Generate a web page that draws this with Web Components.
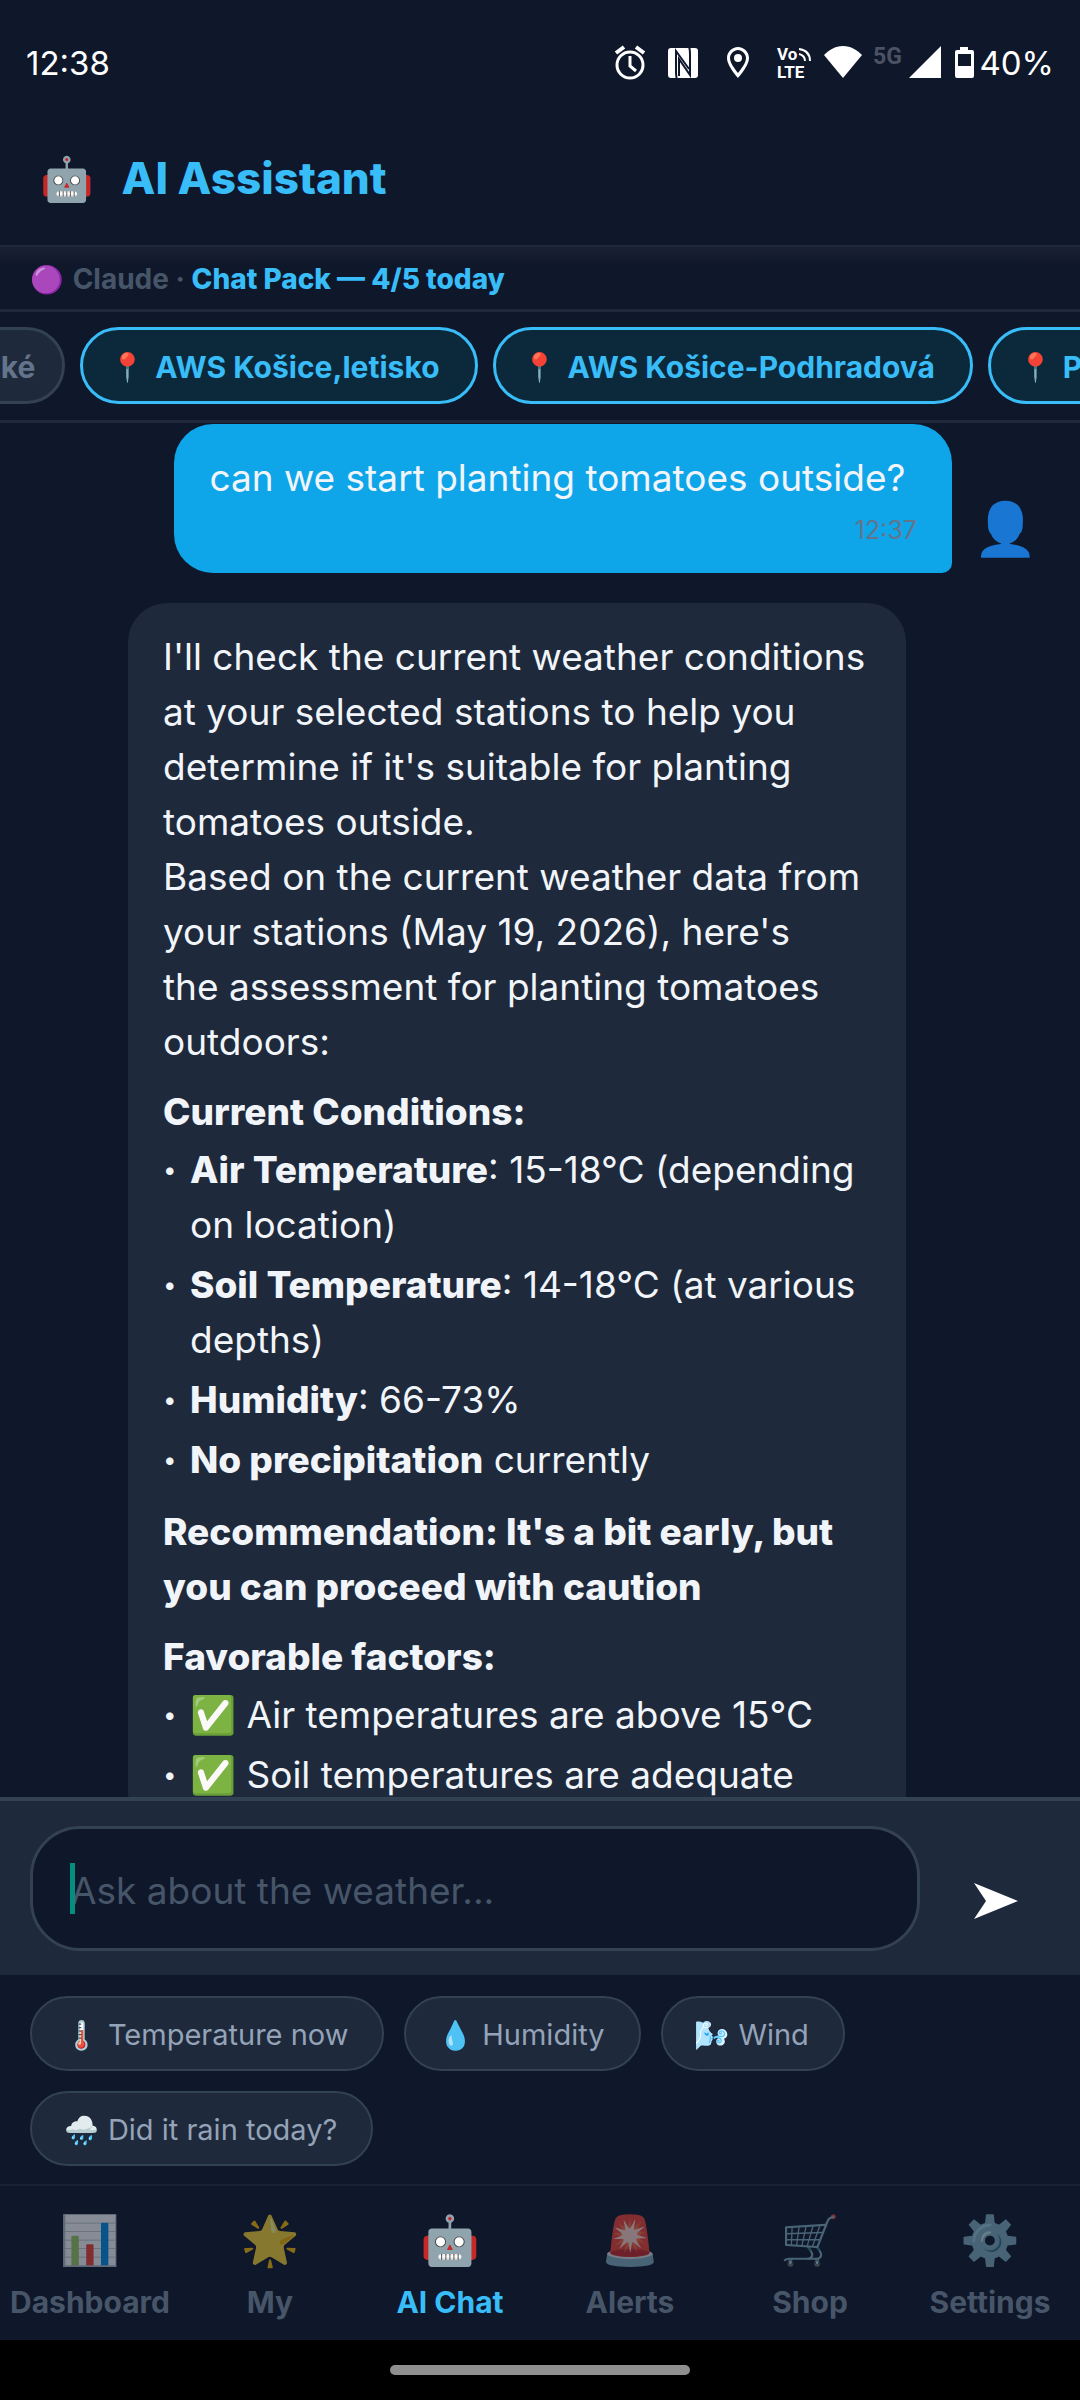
<!DOCTYPE html>
<html lang="en">
<head>
<meta charset="utf-8">
<meta name="viewport" content="width=device-width, initial-scale=1">
<title>AI Assistant</title>
<style>
  body {
    margin: 0;
    height: 100vh;
    display: flex;
    flex-direction: column;
    overflow: hidden;
    background: #0f172a;
    color: #f1f5f9;
    font-family: Inter, "Noto Sans", "Noto Color Emoji", sans-serif;
    font-size: 37px;
  }
</style>
</head>
<body>
  <status-bar time="12:38" battery="40%"></status-bar>
  <app-header icon="🤖">AI Assistant</app-header>
  <plan-line provider="Claude">Chat Pack — 4/5 today</plan-line>

  <station-strip>
    <station-chip off cut>ské</station-chip>
    <station-chip icon="📍">AWS Košice,letisko</station-chip>
    <station-chip icon="📍">AWS Košice-Podhradová</station-chip>
    <station-chip icon="📍">PV</station-chip>
  </station-strip>

  <message-list>
    <chat-message from="user" avatar="👤" time="12:37">can we start planting tomatoes outside?</chat-message>
    <chat-message from="bot">
      <answer-text>I'll check the current weather conditions at your selected stations to help you determine if it's suitable for planting tomatoes outside.</answer-text>
      <answer-text>Based on the current weather data from your stations (May 19, 2026), here's the&nbsp;assessment for planting tomatoes outdoors:</answer-text>
      <answer-heading>Current Conditions:</answer-heading>
      <answer-point><b>Air Temperature</b>: 15-18°C (depending on location)</answer-point>
      <answer-point><b>Soil Temperature</b>: 14-18°C (at various depths)</answer-point>
      <answer-point><b>Humidity</b>: 66-73%</answer-point>
      <answer-point><b>No precipitation</b> currently</answer-point>
      <answer-heading>Recommendation: It's a bit early, but you can proceed with caution</answer-heading>
      <answer-heading>Favorable factors:</answer-heading>
      <answer-point>✅ Air temperatures are above 15°C</answer-point>
      <answer-point>✅ Soil temperatures are adequate</answer-point>
    </chat-message>
  </message-list>

  <chat-composer placeholder="Ask about the weather..."></chat-composer>

  <quick-questions>
    <quick-chip icon="🌡️">Temperature now</quick-chip>
    <quick-chip icon="💧">Humidity</quick-chip>
    <quick-chip icon="🌬️">Wind</quick-chip>
    <quick-chip icon="🌧️">Did it rain today?</quick-chip>
  </quick-questions>

  <tab-bar>
    <tab-item icon="📊" href="#dashboard">Dashboard</tab-item>
    <tab-item icon="🌟" href="#my">My</tab-item>
    <tab-item icon="🤖" href="#chat" active>AI Chat</tab-item>
    <tab-item icon="🚨" href="#alerts">Alerts</tab-item>
    <tab-item icon="🛒" href="#shop">Shop</tab-item>
    <tab-item icon="⚙️" href="#settings">Settings</tab-item>
  </tab-bar>
  <home-indicator></home-indicator>

<script>
// Small helper: every element gets an open shadow root filled from a string
class BaseElement extends HTMLElement {
  constructor() {
    super();
    this.attachShadow({ mode: "open" });
  }

  connectedCallback() {
    this.shadowRoot.innerHTML = this.render();
  }

  attr(name) {
    return this.getAttribute(name) || "";
  }
}

class StatusBar extends BaseElement {
  render() {
    return `
      <style>
        :host {
          display: flex;
          align-items: center;
          justify-content: space-between;
          height: 126px;
          padding: 0 26px;
          box-sizing: border-box;
          flex: none;
          color: #fff;
          font-size: 33px;
        }
        .icons { display: flex; align-items: center; }
        svg { display: block; fill: #fff; }
      </style>
      <span>${this.attr("time")}</span>
      <div class="icons">
        <svg width="366" height="46" viewBox="0 0 366 46" role="img" aria-label="Status icons">
          <!-- alarm -->
          <g fill="none" stroke="#fff" stroke-width="3">
            <circle cx="17" cy="25" r="13"/>
            <path d="M17 16v10l6 5"/>
            <path d="M3 13l8-6M31 13l-8-6" stroke-width="4"/>
          </g>
          <!-- nfc -->
          <rect x="55" y="8" width="30" height="30" rx="3"/>
          <g fill="none" stroke="#0f172a" stroke-width="2">
            <path d="M64 39c-1-2-1-4-1-8V11l13 18"/>
            <path d="M76 7c1 2 1 4 1 8v20L66 19v17"/>
          </g>
          <!-- location -->
          <path fill-rule="evenodd" d="M125 7c-6 0-11 5-11 11 0 8 11 20 11 20s11-12 11-20c0-6-5-11-11-11zm0 3c4 0 8 4 8 8 0 5-5 11-8 15-3-4-8-10-8-15 0-4 4-8 8-8z"/>
          <circle cx="125" cy="18" r="4"/>
          <!-- volte -->
          <g font-family="Roboto, sans-serif" font-weight="700" font-size="17">
            <text x="164" y="20">Vo</text>
            <text x="164" y="38">LTE</text>
          </g>
          <g fill="none" stroke="#fff" stroke-width="2">
            <path d="M186 14c4 1 6 3 6 7M186 9c7 1 11 5 11 12"/>
          </g>
          <!-- wifi -->
          <path d="M230 38L211 15c5-5 11-9 19-9s14 4 19 9z"/>
          <!-- mobile signal -->
          <text x="260" y="24" font-family="Roboto, sans-serif" font-weight="700" font-size="23" fill="#4b5263">5G</text>
          <path d="M296 38L328 6v32z"/>
          <!-- battery -->
          <path fill-rule="evenodd" d="M347 7h8v3h4q2 0 2 2v24q0 2-2 2h-15q-2 0-2-2V12q0-2 2-2h3zm-2 7v12h13V14z"/>
        </svg>
        <span>${this.attr("battery")}</span>
      </div>
    `;
  }
}

class AppHeader extends BaseElement {
  render() {
    return `
      <style>
        :host {
          display: flex;
          align-items: center;
          gap: 28px;
          height: 121px;
          padding: 0 40px 16px;
          box-sizing: border-box;
          flex: none;
          border-bottom: 2px solid #1e293b;
        }
        span { font-size: 43px; line-height: 64px; }
        h1 { margin: 0; font-size: 44px; font-weight: 800; line-height: 64px; color: #38bdf8; }
      </style>
      <span aria-hidden="true">${this.attr("icon")}</span>
      <h1><slot></slot></h1>
    `;
  }
}

class PlanLine extends BaseElement {
  render() {
    return `
      <style>
        :host {
          display: flex;
          align-items: center;
          gap: 9px;
          height: 65px;
          padding: 2px 30px 0;
          box-sizing: border-box;
          flex: none;
          border-bottom: 3px solid #1e293b;
          background: linear-gradient(#1a2134, #0f172a 18px);
          font-size: 28px;
          font-weight: 700;
          color: #475569;
        }
        b { color: #38bdf8; font-weight: 800; }
        .dot { font-size: 27px; }
      </style>
      <span class="dot">🟣</span>
      <span>${this.attr("provider")} · <b><slot></slot></b></span>
    `;
  }
}

class StationStrip extends BaseElement {
  render() {
    return `
      <style>
        :host {
          display: flex;
          gap: 15px;
          padding: 15px 0 16px;
          flex: none;
          overflow: hidden;
          border-bottom: 3px solid #1e293b;
        }
      </style>
      <slot></slot>
    `;
  }
}

class StationChip extends BaseElement {
  render() {
    const icon = this.attr("icon");
    return `
      <style>
        :host { display: block; flex: none; }
        /* chip that is scrolled out past the left edge */
        :host([cut]) { margin-left: -46px; }
        button {
          display: flex;
          align-items: center;
          gap: 10px;
          height: 77px;
          padding: 2px 35px 0 27px;
          border: 3px solid #38bdf8;
          border-radius: 39px;
          background: #0c293b;
          color: #38bdf8;
          font: inherit;
          font-size: 30px;
          font-weight: 700;
          white-space: nowrap;
        }
        span { font-size: 28px; }
        :host([off]) button {
          padding: 2px 27px 0;
          border-color: #334155;
          background: #1e293b;
          color: #64748b;
        }
      </style>
      <button type="button">${icon ? `<span>${icon}</span>` : ""}<slot></slot></button>
    `;
  }
}

class MessageList extends BaseElement {
  render() {
    return `
      <style>
        :host {
          display: flex;
          flex-direction: column;
          gap: 30px;
          flex: 1;
          min-height: 0;
          padding: 1px 30px 0;
          overflow: hidden;
        }
      </style>
      <slot></slot>
    `;
  }
}

class ChatMessage extends BaseElement {
  render() {
    const time = this.attr("time");
    return `
      <style>
        :host { display: flex; align-items: flex-end; flex: none; }
        :host([from="user"]) { flex-direction: row-reverse; }
        .avatar {
          width: 98px;
          padding-left: 10px;
          box-sizing: border-box;
          flex: none;
          text-align: center;
          font-size: 52px;
          line-height: 88px;
        }
        .bubble {
          max-width: 72vw;
          padding: 26px 35px;
          box-sizing: border-box;
          border-radius: 39px;
          background: #1e293b;
          line-height: 55px;
        }
        :host([from="user"]) .bubble {
          min-width: 72vw;
          padding-bottom: 18px;
          border-bottom-right-radius: 10px;
          background: #0ea5e9;
        }
        time { display: block; text-align: right; font-size: 25px; line-height: 50px; color: #64748b; }
      </style>
      <span class="avatar">${this.attr("avatar")}</span>
      <div class="bubble">
        <slot></slot>
        ${time ? `<time>${time}</time>` : ""}
      </div>
    `;
  }
}

class AnswerText extends BaseElement {
  render() {
    return `
      <style>
        :host { display: block; }
        p { margin: 0; }
      </style>
      <p><slot></slot></p>
    `;
  }
}

class AnswerHeading extends BaseElement {
  render() {
    return `
      <style>
        :host { display: block; margin-top: 15px; }
        h2 { margin: 0; font-size: inherit; font-weight: 800; }
      </style>
      <h2><slot></slot></h2>
    `;
  }
}

class AnswerPoint extends BaseElement {
  render() {
    return `
      <style>
        :host { display: flex; padding: 3px 0 2px; }
        .bullet { width: 27px; flex: none; font-size: 24px; }
        ::slotted(b) { font-weight: 800; }
      </style>
      <span class="bullet">•</span>
      <span><slot></slot></span>
    `;
  }
}

class ChatComposer extends BaseElement {
  render() {
    return `
      <style>
        :host {
          display: flex;
          align-items: center;
          gap: 22px;
          padding: 25px 30px 24px;
          flex: none;
          border-top: 4px solid #334155;
          background: #1e293b;
        }
        label { position: relative; display: block; flex: 1; }
        input {
          width: 100%;
          height: 125px;
          padding: 4px 38px 0;
          box-sizing: border-box;
          border: 3px solid #334155;
          border-radius: 50px;
          outline: none;
          background: #0f172a;
          color: #f1f5f9;
          font: inherit;
        }
        input::placeholder { color: #475569; opacity: 1; }
        .caret { position: absolute; left: 40px; top: 37px; width: 5px; height: 51px; background: #058d80; }
        button { width: 108px; height: 100px; padding: 0; border: 0; background: none; }
        svg { display: block; margin: 24px auto 0; }
      </style>
      <label>
        <span class="caret"></span>
        <input type="text" aria-label="Message" placeholder="${this.attr("placeholder")}">
      </label>
      <button type="button" aria-label="Send">
        <svg width="44" height="36" viewBox="0 0 44 36" fill="#fff"><path d="M0 0l44 18L0 36l12-18z"/></svg>
      </button>
    `;
  }
}

class QuickQuestions extends BaseElement {
  render() {
    return `
      <style>
        :host { display: flex; flex-wrap: wrap; gap: 20px; padding: 21px 30px 18px; flex: none; }
      </style>
      <slot></slot>
    `;
  }
}

class QuickChip extends BaseElement {
  render() {
    return `
      <style>
        :host { display: block; }
        button {
          display: flex;
          align-items: center;
          gap: 9px;
          height: 75px;
          padding: 2px 34px 0 32px;
          border: 2px solid #334155;
          border-radius: 38px;
          background: #1e293b;
          color: #94a3b8;
          font: inherit;
          font-size: 29px;
          white-space: nowrap;
        }
        span { font-size: 28px; }
      </style>
      <button type="button"><span>${this.attr("icon")}</span><slot></slot></button>
    `;
  }
}

class TabBar extends BaseElement {
  render() {
    return `
      <style>
        :host { display: block; flex: none; border-top: 2px solid #182235; }
        nav { display: grid; grid-template-columns: repeat(6, 1fr); height: 154px; }
      </style>
      <nav><slot></slot></nav>
    `;
  }
}

class TabItem extends BaseElement {
  render() {
    return `
      <style>
        :host { display: block; min-width: 0; }
        a {
          display: flex;
          flex-direction: column;
          align-items: center;
          gap: 10px;
          padding-top: 22px;
          color: #475569;
          font-size: 30px;
          font-weight: 700;
          line-height: 40px;
          text-decoration: none;
        }
        .icon { font-size: 48px; line-height: 64px; color: #fff; opacity: 0.5; }
        :host([active]) a { color: #38bdf8; }
        :host([active]) .icon { opacity: 1; }
      </style>
      <a href="${this.attr("href")}">
        <span class="icon">${this.attr("icon")}</span>
        <span><slot></slot></span>
      </a>
    `;
  }
}

class HomeIndicator extends BaseElement {
  render() {
    return `
      <style>
        :host { display: flex; justify-content: center; padding: 25px 0; flex: none; background: #000; }
        div { width: 300px; height: 10px; border-radius: 5px; background: #8f8f8f; }
      </style>
      <div></div>
    `;
  }
}

// Define custom elements
customElements.define("status-bar", StatusBar);
customElements.define("app-header", AppHeader);
customElements.define("plan-line", PlanLine);
customElements.define("station-strip", StationStrip);
customElements.define("station-chip", StationChip);
customElements.define("message-list", MessageList);
customElements.define("chat-message", ChatMessage);
customElements.define("answer-text", AnswerText);
customElements.define("answer-heading", AnswerHeading);
customElements.define("answer-point", AnswerPoint);
customElements.define("chat-composer", ChatComposer);
customElements.define("quick-questions", QuickQuestions);
customElements.define("quick-chip", QuickChip);
customElements.define("tab-bar", TabBar);
customElements.define("tab-item", TabItem);
customElements.define("home-indicator", HomeIndicator);
</script>
</body>
</html>
